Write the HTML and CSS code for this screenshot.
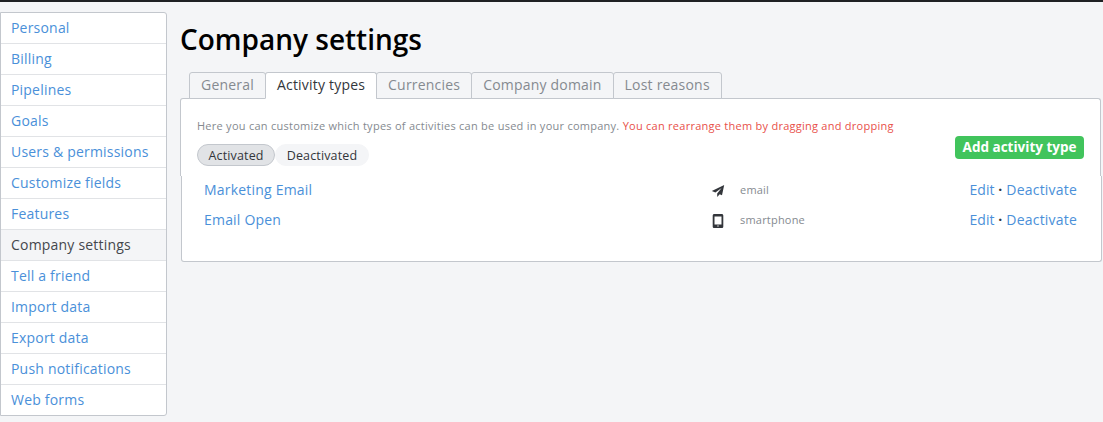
FILE: index.html
```html
<!DOCTYPE html>
<html lang="en">
<head>
<meta charset="utf-8">
<title>Company settings</title>
<link rel="stylesheet" href="styles.css">
</head>
<body>
<div class="topline"></div>
<div class="layout">
  <nav class="sidebar">
    <a class="side-item">Personal</a>
    <a class="side-item">Billing</a>
    <a class="side-item">Pipelines</a>
    <a class="side-item">Goals</a>
    <a class="side-item">Users &amp; permissions</a>
    <a class="side-item">Customize fields</a>
    <a class="side-item">Features</a>
    <a class="side-item current">Company settings</a>
    <a class="side-item">Tell a friend</a>
    <a class="side-item">Import data</a>
    <a class="side-item">Export data</a>
    <a class="side-item">Push notifications</a>
    <a class="side-item">Web forms</a>
  </nav>
  <main class="content">
    <h1 class="title">Company settings</h1>
    <div class="tabs">
      <a class="tab">General</a>
      <a class="tab active">Activity types</a>
      <a class="tab">Currencies</a>
      <a class="tab">Company domain</a>
      <a class="tab">Lost reasons</a>
    </div>
    <section class="panel">
      <div class="panel-head">
        <p class="hint">Here you can customize which types of activities can be used in your company. <span class="hint-red">You can rearrange them by dragging and dropping</span></p>
        <div class="controls">
          <div class="toggle">
            <span class="pill on">Activated</span>
            <span class="pill">Deactivated</span>
          </div>
          <a class="add-btn">Add activity type</a>
        </div>
      </div>
      <div class="panel-body">
        <div class="row">
          <a class="row-name">Marketing Email</a>
          <svg class="row-icon" viewBox="0 0 14 14" width="14" height="14"><path fill="#33363b" d="M13.200 1 .8 7l3.600 1.400L10.600 4 6.200 9.400V13l2.500-2.700 2.300 1z"/></svg>
          <span class="row-type">email</span>
          <span class="row-actions"><a>Edit</a> <b>·</b> <a>Deactivate</a></span>
        </div>
        <div class="row">
          <a class="row-name">Email Open</a>
          <svg class="row-icon" viewBox="0 0 14 14" width="14" height="14"><path fill="#33363b" fill-rule="evenodd" d="M3.300 0h7.400c.9 0 1.600.7 1.600 1.600v10.800c0 .9-.7 1.600-1.600 1.600H3.300c-.9 0-1.600-.7-1.600-1.600V1.600C1.700.7 2.400 0 3.300 0zm.2 2.400v8h7v-8zM7 11.200l-.9.8.9.8.9-.8z"/></svg>
          <span class="row-type">smartphone</span>
          <span class="row-actions"><a>Edit</a> <b>·</b> <a>Deactivate</a></span>
        </div>
      </div>
    </section>
  </main>
</div>
</body>
</html>
```

FILE: styles.css
```css
html, body {
  margin: 0;
  padding: 0;
  height: 100%;
}
body {
  background: #f4f5f7;
  font-family: "Open Sans", "Liberation Sans", sans-serif;
  font-size: 14px;
  color: #33363b;
  overflow: hidden;
}
.topline {
  height: 2px;
  background: #1f2124;
}
.layout {
  display: flex;
  align-items: flex-start;
  padding-top: 10px;
}
.sidebar {
  flex: none;
  box-sizing: border-box;
  width: 167px;
  display: flex;
  flex-direction: column;
  background: #fff;
  border: 1px solid #c3c7cd;
  border-radius: 0 3px 3px 0;
}
.side-item {
  box-sizing: border-box;
  height: 31px;
  line-height: 30px;
  padding-left: 10px;
  color: #4a90d9;
  letter-spacing: 0.2px;
  border-bottom: 1px solid #e1e3e6;
  white-space: nowrap;
}
.side-item:last-child {
  border-bottom: 0;
  height: 30px;
}
.side-item.current {
  background: #f4f5f7;
  color: #44474c;
}
.content {
  flex: none;
  width: 921px;
  margin-left: 13px;
}
.title {
  margin: 8px 0 0;
  font-size: 28px;
  line-height: 38px;
  font-weight: 600;
  color: #000;
}
.tabs {
  display: flex;
  padding-left: 9px;
  margin-top: 14px;
  height: 26px;
  position: relative;
  z-index: 1;
}
.tab {
  box-sizing: border-box;
  height: 27px;
  line-height: 24px;
  padding: 0 11px;
  margin-right: -1px;
  color: #858a90;
  letter-spacing: 0.2px;
  background: #f4f5f7;
  border: 1px solid #c3c7cd;
  border-radius: 3px 3px 0 0;
}
.tab.active {
  background: #fff;
  color: #33363b;
  border-bottom-color: #fff;
}
.panel {
  width: 921px;
}
.panel-head {
  box-sizing: border-box;
  height: 78px;
  background: #fff;
  border: 1px solid #c3c7cd;
  border-bottom: 0;
  border-radius: 3px 3px 0 0;
  padding: 17px 16px 0 16px;
}
.hint {
  margin: 0;
  font-size: 11px;
  line-height: 19px;
  letter-spacing: 0.26px;
  color: #858a90;
}
.hint-red {
  color: #e8504a;
}
.controls {
  display: flex;
  justify-content: space-between;
  align-items: flex-start;
  margin-top: 9px;
}
.toggle {
  display: flex;
}
.pill {
  box-sizing: border-box;
  height: 22px;
  line-height: 21px;
  font-size: 12.5px;
  letter-spacing: 0.15px;
  padding: 0 10.500px;
  border-radius: 11px;
  background: #f4f5f7;
  color: #33363b;
  border: 1px solid #f4f5f7;
}
.pill.on {
  background: #e1e3e6;
  border-color: #c3c7cd;
}
.add-btn {
  box-sizing: border-box;
  height: 23px;
  line-height: 22px;
  margin-top: -8px;
  padding: 0 7.500px;
  background: #41c45c;
  color: #fff;
  font-weight: 700;
  font-size: 13.500px;
  letter-spacing: 0;
  border-radius: 4px;
}
.panel-body {
  box-sizing: border-box;
  width: 921px;
  height: 86px;
  margin-left: 1px;
  background: #fff;
  border: 1px solid #c3c7cd;
  border-top: 0;
  border-radius: 0 0 3px 3px;
}
.row {
  display: flex;
  align-items: center;
  height: 26px;
  margin-bottom: 4px;
  padding: 0 24px 0 22px;
}
.row-name {
  width: 507px;
  color: #4a90d9;
  letter-spacing: 0.2px;
}
.row-icon {
  flex: none;
  margin: 3px 15px 0 0;
}
.row-type {
  flex: 1;
  font-size: 11px;
  letter-spacing: 0.2px;
  color: #858a90;
}
.row-actions {
  color: #4a90d9;
  letter-spacing: 0.2px;
  white-space: nowrap;
}
.row-actions a:first-child {
  letter-spacing: 0;
}
.row-actions b {
  color: #33363b;
  font-weight: 700;
}
```
